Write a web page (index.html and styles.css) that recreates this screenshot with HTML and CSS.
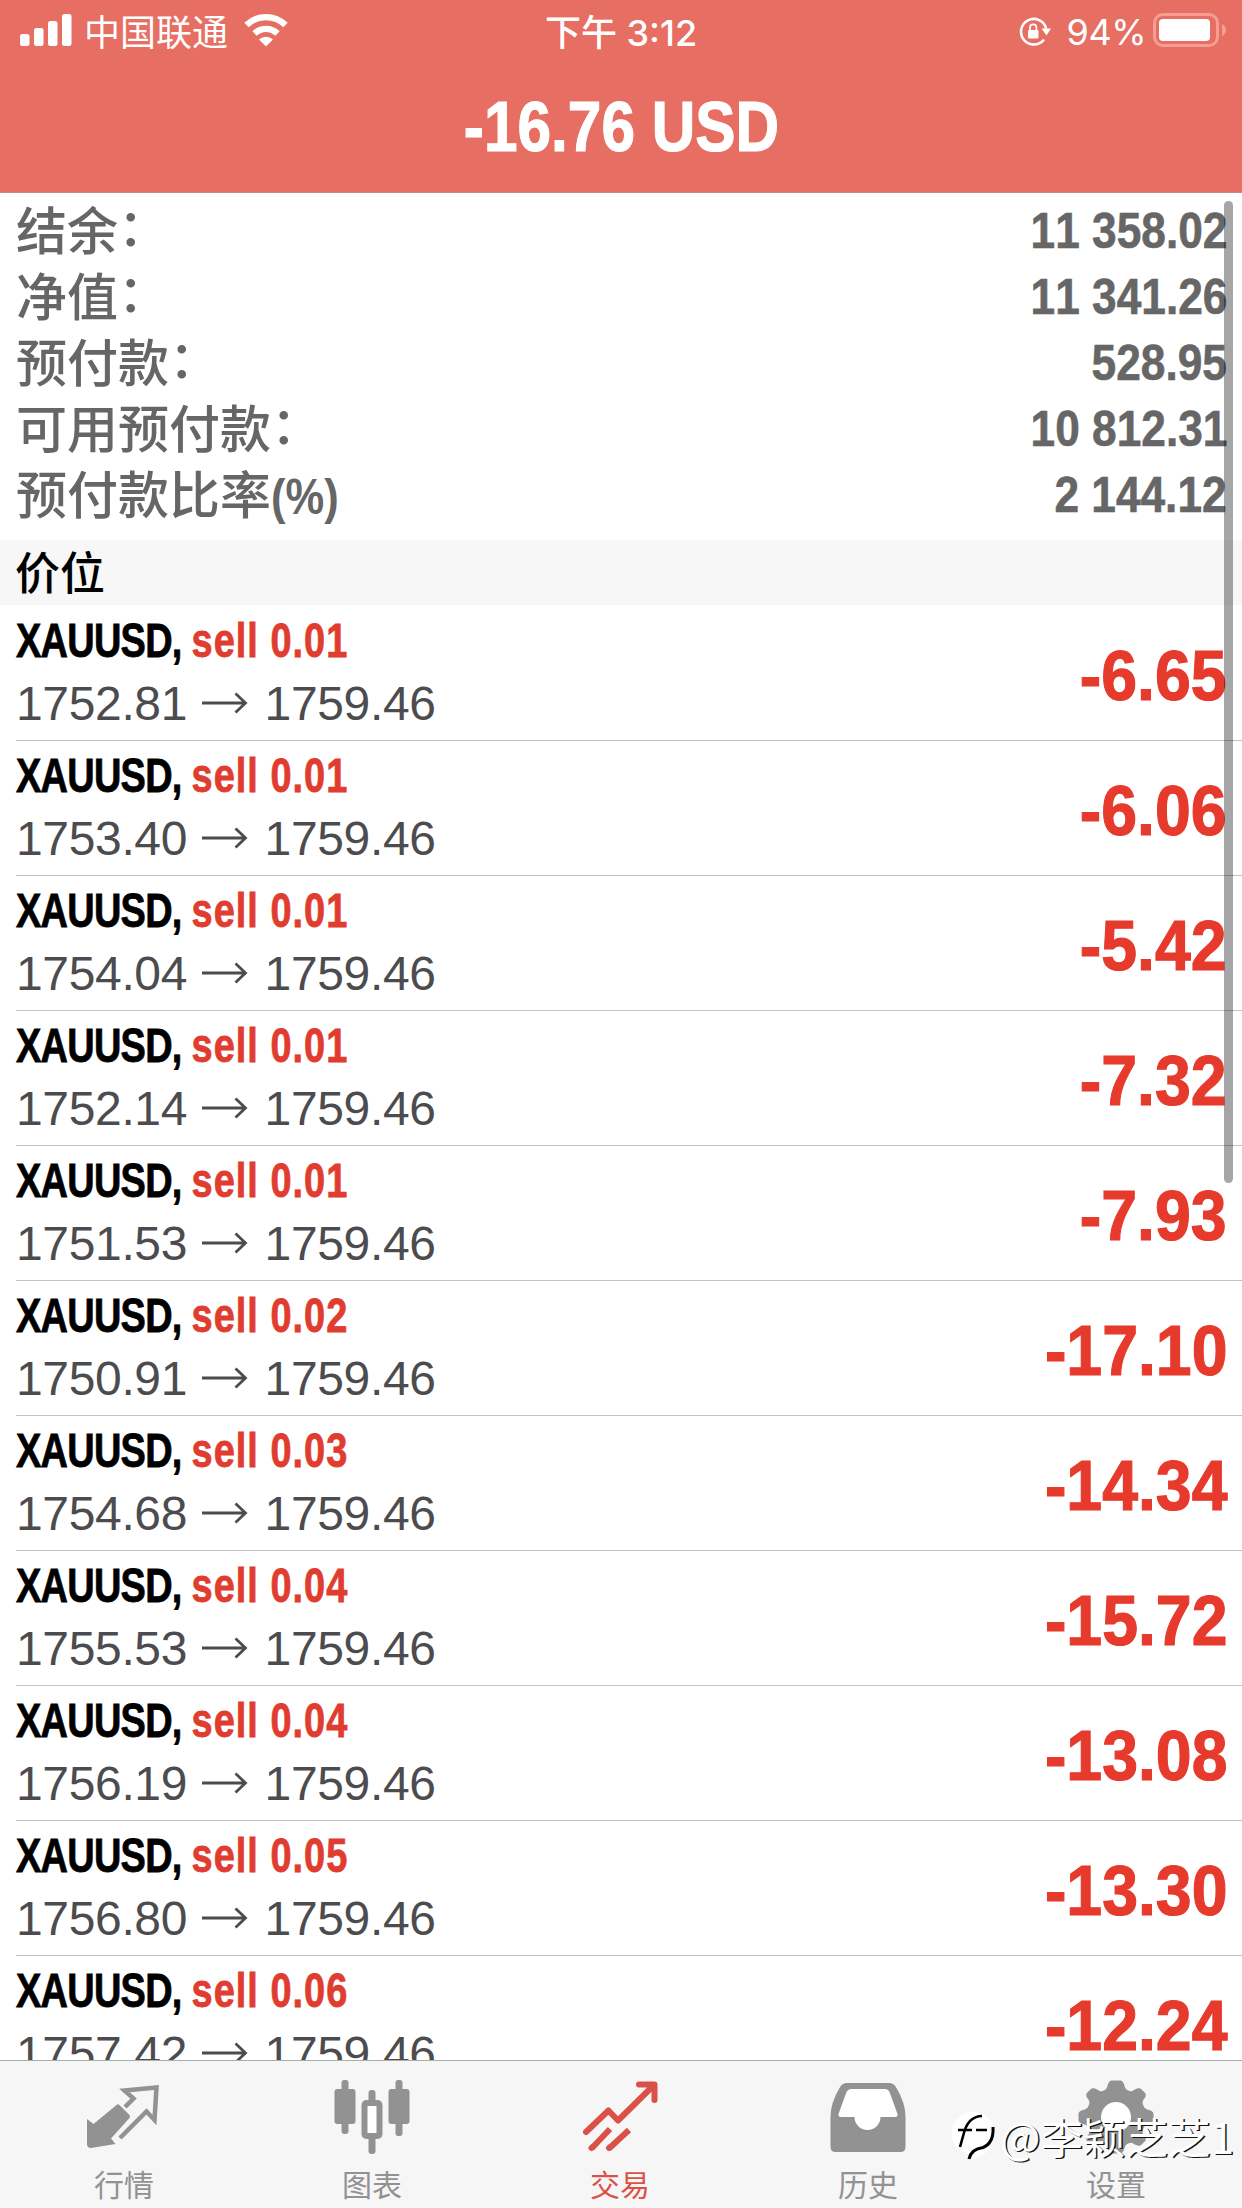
FILE: index.html
```html
<!DOCTYPE html>
<html lang="zh-CN">
<head>
    <meta charset="UTF-8">
    <title>交易</title>
    <link rel="stylesheet" href="styles.css">
</head>
<body>
    <svg class="defs" width="0" height="0">
        <symbol id="arrow" viewBox="0 0 48 24">
            <path d="M1 12H44M34.5 2.5L44.5 12L34.5 21.5" fill="none" stroke="currentColor" stroke-width="2.8"/>
        </symbol>
    </svg>

    <div class="header">
        <div class="status-bar">
            <div class="status-left">
                <svg class="signal" width="52" height="33" viewBox="0 0 52 33" fill="#fff">
                    <rect x="0" y="20" width="9.500" height="12" rx="2.500"/>
                    <rect x="14" y="14" width="9.500" height="18" rx="2.500"/>
                    <rect x="28" y="7" width="9.500" height="25" rx="2.500"/>
                    <rect x="42" y="0" width="9.500" height="32" rx="2.500"/>
                </svg>
                <span class="carrier">中国联通</span>
                <svg class="wifi" width="46" height="34" viewBox="0 0 46 34">
                    <path d="M3.500 12A28 28 0 0 1 42.500 12M11.500 20.500A16.500 16.500 0 0 1 34.500 20.500" fill="none" stroke="#fff" stroke-width="6.200"/>
                    <path d="M16 26.500A10 10 0 0 1 30 26.500L23 33.500Z" fill="#fff"/>
                </svg>
            </div>
            <div class="time">下午 <span>3:12</span></div>
            <div class="status-right">
                <svg class="lock" width="32" height="30" viewBox="0 0 32 30">
                    <path d="M27.200 11.500A12.800 12.800 0 1 0 25 22.500" fill="none" stroke="#fff" stroke-width="2.500"/>
                    <path d="M22.500 11.500H32L27.500 18.500Z" fill="#fff"/>
                    <rect x="9" y="13" width="10.500" height="8.500" rx="1" fill="#fff"/>
                    <path d="M11 13.500V10.500A3.200 3.200 0 0 1 17.400 10.500V13.500" fill="none" stroke="#fff" stroke-width="1.800"/>
                </svg>
                <span class="percent">94%</span>
                <svg class="battery" width="74" height="34" viewBox="0 0 74 34">
                    <rect x="1.500" y="1.500" width="63" height="31" rx="8.500" fill="none" stroke="#f79e93" stroke-width="3"/>
                    <rect x="6" y="6" width="51" height="22" rx="4" fill="#fff"/>
                    <path d="M69 11Q73 13 73 17T69 23Z" fill="#f79e93"/>
                </svg>
            </div>
        </div>
        <h1><span>-16.76 USD</span></h1>
    </div>

    <div class="content">
        <div class="summary">
            <div class="summary-row"><span>结余<em>：</em></span><b>11 358.02</b></div>
            <div class="summary-row"><span>净值<em>：</em></span><b>11 341.26</b></div>
            <div class="summary-row"><span>预付款<em>：</em></span><b>528.95</b></div>
            <div class="summary-row"><span>可用预付款<em>：</em></span><b>10 812.31</b></div>
            <div class="summary-row"><span>预付款比率<i>(%)</i></span><b>2 144.12</b></div>
        </div>
        <h2>价位</h2>
        <div class="positions">
            <div class="position">
                <div>
                    <p class="symbol">XAUUSD, <span>sell 0.01</span></p>
                    <p class="price">1752.81 <svg><use href="#arrow"/></svg> 1759.46</p>
                </div>
                <span class="profit">-6.65</span>
            </div>
            <div class="position">
                <div>
                    <p class="symbol">XAUUSD, <span>sell 0.01</span></p>
                    <p class="price">1753.40 <svg><use href="#arrow"/></svg> 1759.46</p>
                </div>
                <span class="profit">-6.06</span>
            </div>
            <div class="position">
                <div>
                    <p class="symbol">XAUUSD, <span>sell 0.01</span></p>
                    <p class="price">1754.04 <svg><use href="#arrow"/></svg> 1759.46</p>
                </div>
                <span class="profit">-5.42</span>
            </div>
            <div class="position">
                <div>
                    <p class="symbol">XAUUSD, <span>sell 0.01</span></p>
                    <p class="price">1752.14 <svg><use href="#arrow"/></svg> 1759.46</p>
                </div>
                <span class="profit">-7.32</span>
            </div>
            <div class="position">
                <div>
                    <p class="symbol">XAUUSD, <span>sell 0.01</span></p>
                    <p class="price">1751.53 <svg><use href="#arrow"/></svg> 1759.46</p>
                </div>
                <span class="profit">-7.93</span>
            </div>
            <div class="position">
                <div>
                    <p class="symbol">XAUUSD, <span>sell 0.02</span></p>
                    <p class="price">1750.91 <svg><use href="#arrow"/></svg> 1759.46</p>
                </div>
                <span class="profit">-17.10</span>
            </div>
            <div class="position">
                <div>
                    <p class="symbol">XAUUSD, <span>sell 0.03</span></p>
                    <p class="price">1754.68 <svg><use href="#arrow"/></svg> 1759.46</p>
                </div>
                <span class="profit">-14.34</span>
            </div>
            <div class="position">
                <div>
                    <p class="symbol">XAUUSD, <span>sell 0.04</span></p>
                    <p class="price">1755.53 <svg><use href="#arrow"/></svg> 1759.46</p>
                </div>
                <span class="profit">-15.72</span>
            </div>
            <div class="position">
                <div>
                    <p class="symbol">XAUUSD, <span>sell 0.04</span></p>
                    <p class="price">1756.19 <svg><use href="#arrow"/></svg> 1759.46</p>
                </div>
                <span class="profit">-13.08</span>
            </div>
            <div class="position">
                <div>
                    <p class="symbol">XAUUSD, <span>sell 0.05</span></p>
                    <p class="price">1756.80 <svg><use href="#arrow"/></svg> 1759.46</p>
                </div>
                <span class="profit">-13.30</span>
            </div>
            <div class="position">
                <div>
                    <p class="symbol">XAUUSD, <span>sell 0.06</span></p>
                    <p class="price">1757.42 <svg><use href="#arrow"/></svg> 1759.46</p>
                </div>
                <span class="profit">-12.24</span>
            </div>
        </div>
        <div class="scrollbar"></div>
    </div>

    <div class="tab-bar">
        <div class="tab">
            <svg width="76" height="76" viewBox="0 0 76 76">
                <path d="M30.500 27Q32 25.500 33.500 27L43.500 37Q44.500 38.500 43.500 40L25 60.500L29.500 66L5 70Q1 70 1 66V41L7.500 46Z" fill="#929292"/>
                <path d="M39 29L47.500 20.500L38.500 12.500L70.500 9.500L68.500 42L60.500 33.500L34 60" fill="none" stroke="#929292" stroke-width="4.500"/>
            </svg>
            <span>行情</span>
        </div>
        <div class="tab">
            <svg width="76" height="76" viewBox="0 0 76 76" fill="#929292">
                <rect x="7.500" y="2" width="7" height="54" rx="3"/>
                <rect x="0.500" y="11" width="21" height="35" rx="3"/>
                <rect x="61.500" y="2" width="7" height="56" rx="3"/>
                <rect x="54.500" y="11" width="21" height="35" rx="3"/>
                <rect x="34.500" y="12" width="7" height="14" rx="3"/>
                <rect x="34.500" y="56" width="7" height="20" rx="3"/>
                <rect x="30.500" y="25" width="15" height="33" rx="2" fill="#fff" stroke="#929292" stroke-width="6"/>
            </svg>
            <span>图表</span>
        </div>
        <div class="tab active">
            <svg width="76" height="76" viewBox="0 0 76 76" fill="none" stroke="#dc5147" stroke-width="6">
                <path d="M4 54L26.500 32.500L36 42.500L71 8M57 6.500H72.500V22" stroke-linecap="round" stroke-linejoin="round"/>
                <path d="M9.500 70.500L28 51M27 70.500L47 52"/>
                <path d="M9.500 70L10 69.500M27 70L27.500 69.500" stroke-linecap="round"/>
            </svg>
            <span>交易</span>
        </div>
        <div class="tab">
            <svg width="76" height="76" viewBox="0 0 76 76">
                <path d="M17 5H59Q64 5 66.500 10Q75.500 25 75.500 39V69Q75.500 74 70.500 74H5.500Q0.500 74 0.500 69V39Q0.500 25 9.500 10Q12 5 17 5Z" fill="#929292"/>
                <path d="M22 11H55Q58 11 59.500 14L67.500 36Q68 39 65 39H50.500A13 13 0 0 1 24.500 39H11Q8 39 8.500 36L16.500 14Q18 11 22 11Z" fill="#fff"/>
            </svg>
            <span>历史</span>
        </div>
        <div class="tab">
            <svg width="76" height="76" viewBox="0 0 76 76">
                <path d="M34 4H42Q44 4 45 8Q46 13 50 14Q54 16 57 13Q61 11 62 12L66 16Q67 18 64 21Q62 25 64 28Q65 32 69 33Q74 34 74 36V42Q74 44 69 45Q65 46 64 50Q62 54 64 57Q67 60 66 62L62 66Q61 67 57 65Q54 62 50 64Q46 65 45 70Q44 74 42 74H34Q32 74 31 70Q30 65 26 64Q22 62 19 65Q15 67 14 66L10 62Q9 60 12 57Q14 54 12 50Q11 46 7 45Q2 44 2 42V36Q2 34 7 33Q11 32 12 28Q14 25 12 21Q9 18 10 16L14 12Q15 11 19 13Q22 16 26 14Q30 13 31 8Q32 4 34 4Z" fill="#929292" stroke="#929292" stroke-width="3"/>
                <circle cx="38" cy="39" r="15" fill="#fff"/>
            </svg>
            <span>设置</span>
        </div>
        <div class="watermark">
            <svg width="50" height="50" viewBox="0 0 50 50">
                <circle cx="23" cy="22" r="21.500" fill="#fff"/>
                <path d="M22 42L19 49Q38 46 43 30L43 20Z" fill="#fff"/>
                <path d="M10 36L14.500 20Q19 5.500 32 5M8 19H22M26 19H37" fill="none" stroke="#000" stroke-width="2.600"/>
                <path d="M43 16Q44 32 33 36.500Q21 38 19 48" fill="none" stroke="#000" stroke-width="3"/>
            </svg>
            <span>@李颖芝芝1</span>
        </div>
    </div>
</body>
</html>
```
FILE: styles.css
```css
* {
    margin: 0;
    padding: 0;
    box-sizing: border-box;
}

body {
    width: 1242px;
    height: 2208px;
    display: flex;
    flex-direction: column;
    overflow: hidden;
    background: #fff;
    font-family: "Liberation Sans", "Noto Sans CJK SC", sans-serif;
    font-kerning: none;
}

.defs {
    display: none;
}

/* Header */
.header {
    height: 193px;
    background: #e66e62;
    border-bottom: 1px solid #c08c86;
    color: #fff;
}

.status-bar {
    height: 64px;
    padding: 0 15px 0 20px;
    display: grid;
    grid-template-columns: 1fr auto 1fr;
    align-items: center;
    font-family: Inter, "Noto Sans CJK SC", sans-serif;
    font-size: 36px;
}

.status-left,
.status-right {
    display: flex;
    align-items: center;
}

.status-right {
    justify-content: flex-end;
}

.signal {
    margin: 0 12px 4px 0;
}

.carrier {
    padding-bottom: 5px;
    font-weight: 400;
}

.wifi {
    margin: 0 0 5px 15px;
}

.time {
    padding-bottom: 5px;
    margin-right: 5px;
    font-weight: 500;
}

.lock {
    margin-right: 16px;
}

.percent {
    margin-right: 7px;
    padding-bottom: 1px;
    font-weight: 400;
    letter-spacing: -0.5px;
}

.battery {
    margin-bottom: 4px;
}

h1 {
    height: 128px;
    line-height: 125px;
    text-align: center;
    font-size: 71px;
    -webkit-text-stroke: 1.2px #fff;
}

h1 span {
    display: inline-block;
    transform: scaleX(0.85);
}

/* Account summary */
.content {
    position: relative;
    height: 1867px;
    overflow: hidden;
}

.summary {
    height: 347px;
    padding: 5px 15px 0 16px;
    color: #666;
}

.summary-row {
    height: 66px;
    display: flex;
    justify-content: space-between;
    font-size: 51px;
    line-height: 67px;
    font-weight: 500;
    white-space: nowrap;
}

.summary-row span {
    line-height: 61px;
    font-family: "Noto Sans CJK SC", sans-serif;
}

.summary-row em {
    font-style: normal;
    line-height: 1;
    vertical-align: 4px;
}

.summary-row i {
    display: inline-block;
    font-family: "Liberation Sans", sans-serif;
    font-size: 50px;
    font-style: normal;
    font-weight: 700;
    transform: scaleX(0.87);
    transform-origin: left;
}

.summary-row b {
    font-size: 50px;
    -webkit-text-stroke: 0.6px #666;
    transform: scaleX(0.885);
    transform-origin: right;
}

h2 {
    height: 65px;
    padding-left: 15px;
    background: #f7f7f7;
    color: #000;
    font-family: "Noto Sans CJK SC", sans-serif;
    font-size: 45px;
    font-weight: 500;
    line-height: 62px;
}

/* Open positions */
.positions {
    padding-top: 1px;
}

.position {
    height: 135px;
    margin-left: 16px;
    padding-right: 15px;
    display: flex;
    justify-content: space-between;
    border-bottom: 1px solid #c3c3c5;
    white-space: nowrap;
}

.symbol {
    padding-top: 7px;
    font-size: 48px;
    font-weight: 700;
    line-height: 56px;
    letter-spacing: -0.9px;
    color: #000;
    -webkit-text-stroke: 0.8px currentColor;
    transform: scaleX(0.79);
    transform-origin: left;
}

.symbol span {
    color: #e03c2f;
    letter-spacing: 1.3px;
}

.price {
    font-size: 48px;
    line-height: 69px;
    letter-spacing: -0.35px;
    color: #4c4c4f;
}

.price svg {
    width: 48px;
    height: 24px;
    margin: 0 3px 5px 0.5px;
    vertical-align: baseline;
}

.profit {
    font-size: 70px;
    font-weight: 700;
    line-height: 140px;
    color: #e63a2d;
    -webkit-text-stroke: 1.2px #e63a2d;
    transform: scaleX(0.92);
    transform-origin: right;
}

.scrollbar {
    position: absolute;
    top: 8px;
    right: 9px;
    width: 9px;
    height: 982px;
    border-radius: 5px;
    background: rgba(0, 0, 0, 0.35);
}

/* Tab bar */
.tab-bar {
    position: relative;
    height: 148px;
    padding-right: 2px;
    display: flex;
    background: #f6f6f6;
    border-top: 1px solid #a9b0a9;
}

.tab {
    flex: 1;
    padding-top: 17px;
    display: flex;
    flex-direction: column;
    align-items: center;
    color: #929292;
    font-family: "Noto Sans CJK SC", sans-serif;
    font-size: 30px;
    line-height: 44px;
}

.tab span {
    margin-top: 7px;
}

.tab.active {
    color: #dc5147;
}

.watermark {
    position: absolute;
    right: 8px;
    top: 48px;
    display: flex;
    align-items: center;
    color: #fff;
    font-family: "Noto Sans CJK SC", sans-serif;
    font-size: 42.500px;
    line-height: 54px;
    text-shadow: 1.5px 1px 0 #111;
}
```
